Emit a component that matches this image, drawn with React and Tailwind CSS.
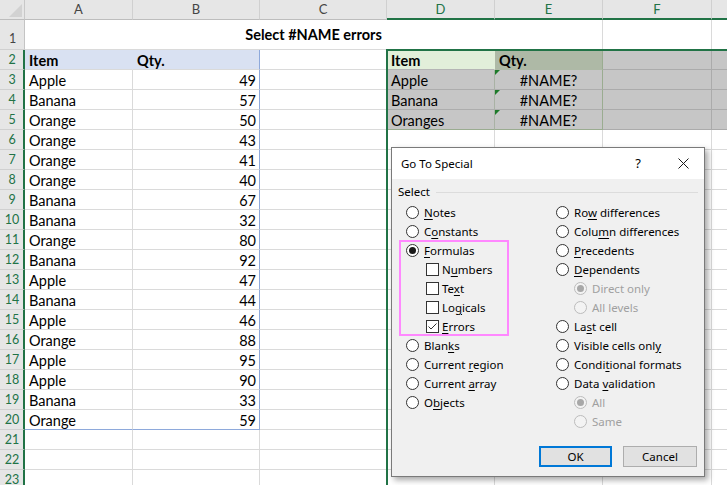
import React from "react";

const COLS = [
  { k: "A", w: "w-[108px]" },
  { k: "B", w: "w-[127px]" },
  { k: "C", w: "w-[127px]" },
  { k: "D", w: "w-[108px]" },
  { k: "E", w: "w-[108px]" },
  { k: "F", w: "w-[109px]" },
  { k: "G", w: "w-[40px]" },
];

const LEFT = [
  ["Apple", 49], ["Banana", 57], ["Orange", 50], ["Orange", 43], ["Orange", 41],
  ["Orange", 40], ["Banana", 67], ["Banana", 32], ["Orange", 80], ["Banana", 92],
  ["Apple", 47], ["Banana", 44], ["Apple", 46], ["Orange", 88], ["Apple", 95],
  ["Apple", 90], ["Banana", 33], ["Orange", 59],
];
const RIGHT = ["Apple", "Banana", "Oranges"];

function cellProps(col, row) {
  let bg = "bg-white";
  let br = "border-r-[#dadada]";
  let bb = "border-b-[#dadada]";
  let content = null;
  let align = "justify-start pl-[4px]";
  let bold = "";

  if (col === "A" || col === "B") {
    if (row === 2) {
      bg = "bg-[#d9e1f2]";
      bold = "font-bold";
      br = col === "A" ? "border-r-[#d9e1f2]" : "border-r-[#8ea9db]";
      content = col === "A" ? "Item" : "Qty.";
    } else if (row >= 3 && row <= 20) {
      const d = LEFT[row - 3];
      if (col === "A") {
        content = d[0];
      } else {
        content = d[1];
        align = "justify-end pr-[3px]";
        br = "border-r-[#8ea9db]";
      }
      if (row === 20) bb = "border-b-[#8ea9db]";
    }
  }
  if (col === "D" && row >= 2 && row <= 5) {
    if (row === 2) {
      bg = "bg-[#e2efda]";
      bold = "font-bold";
      content = "Item";
      br = "border-r-[#e2efda]";
      bb = "border-b-[#b5b5b5]";
    } else {
      bg = "bg-[#c6c6c6]";
      content = RIGHT[row - 3];
      br = "border-r-[#a9b2a4]";
      bb = row === 5 ? "border-b-[#9aac90]" : "border-b-[#adadad]";
    }
  }
  if (col === "E" && row >= 2 && row <= 5) {
    br = "border-r-[#9aac90]";
    if (row === 2) {
      bg = "bg-[#aeb9a6]";
      bold = "font-bold";
      content = "Qty.";
      bb = "border-b-[#aeb9a6]";
    } else {
      bg = "bg-[#c6c6c6]";
      content = "#NAME?";
      align = "justify-center";
      bb = row === 5 ? "border-b-[#9aac90]" : "border-b-[#adadad]";
    }
  }
  if ((col === "F" || col === "G") && row >= 2 && row <= 5) {
    bg = "bg-[#c6c6c6]";
    br = "border-r-[#ababab]";
    bb = "border-b-[#ababab]";
  }
  return { cls: `${bg} ${br} ${bb} ${align} ${bold}`, content };
}

function RowHeader({ n, h }) {
  const sel = n >= 2;
  return (
    <div
      className={`${h} w-[25px] shrink-0 bg-[#e6e6e6] border-b border-b-[#d0d0d0] flex justify-center text-[12.5px] ${
        sel
          ? "border-r-2 border-r-[#217346] text-[#217346] items-center"
          : "border-r border-r-[#c4c4c4] text-[#444] items-end pb-[3px]"
      }`}
    >
      <span className="leading-[14px] pl-[1px]">{n}</span>
    </div>
  );
}

function HeaderRow() {
  return (
    <div className="flex h-[20px]">
      <div className="w-[25px] shrink-0 h-[20px] bg-[#e6e6e6] border-r border-r-[#c8c8c8] border-b border-b-[#bdbdbd] relative flex items-end justify-end">
        <svg width="13" height="13" viewBox="0 0 13 13" className="mr-[2px] mb-[2px]">
          <polygon points="13,0 13,13 0,13" fill="#d2d2d2" />
        </svg>
      </div>
      {COLS.map((c, i) => {
        const sel = i >= 3;
        return (
          <div
            key={c.k}
            className={`${c.w} shrink-0 h-[20px] bg-[#e6e6e6] border-r border-r-[#d0d0d0] flex items-center justify-center text-[13px] ${
              sel
                ? "border-b-2 border-b-[#217346] text-[#217346] pt-[1px]"
                : "border-b border-b-[#bdbdbd] text-[#444]"
            }`}
          >
            {c.k === "G" ? "" : c.k}
          </div>
        );
      })}
    </div>
  );
}

function Row1() {
  return (
    <div className="flex h-[30px]">
      <RowHeader n={1} h="h-[30px]" />
      <div className="w-[578px] shrink-0 h-[30px] bg-white border-r border-r-[#dadada] border-b border-b-[#dadada] flex items-end justify-center pb-[5px]">
        <span className="font-bold leading-[18px]">Select #NAME errors</span>
      </div>
      <div className="w-[109px] shrink-0 h-[30px] bg-white border-r border-r-[#dadada] border-b border-b-[#dadada]" />
      <div className="w-[40px] shrink-0 h-[30px] bg-white border-r border-r-[#dadada] border-b border-b-[#dadada]" />
    </div>
  );
}

function DataRow({ n }) {
  return (
    <div className="flex h-[20px]">
      <RowHeader n={n} h="h-[20px]" />
      {COLS.map((c) => {
        const p = cellProps(c.k, n);
        const err = c.k === "E" && n >= 3 && n <= 5;
        return (
          <div
            key={c.k}
            className={`${c.w} shrink-0 h-[20px] border-r border-b flex items-center overflow-hidden whitespace-nowrap relative ${p.cls}`}
          >
            {err && (
              <span className="absolute left-0 top-0 w-0 h-0 border-t-[5px] border-t-[#1d7a2a] border-r-[5px] border-r-transparent" />
            )}
            <span className="leading-[19px] pt-[1px]">{p.content}</span>
          </div>
        );
      })}
    </div>
  );
}

function Radio({ on, disabled }) {
  return (
    <span
      className={`w-[13px] h-[13px] rounded-full border shrink-0 flex items-center justify-center ${
        disabled ? "border-[#bcbcbc] bg-[#f3f3f3]" : "border-[#333] bg-white"
      }`}
    >
      {on && (
        <span className={`w-[7px] h-[7px] rounded-full ${disabled ? "bg-[#a8a8a8]" : "bg-[#1a1a1a]"}`} />
      )}
    </span>
  );
}

function Check({ on }) {
  return (
    <span className="w-[13px] h-[13px] border border-[#333] bg-white shrink-0 flex items-center justify-center">
      {on && (
        <svg width="11" height="11" viewBox="0 0 11 11">
          <path d="M1.5 5.5 L4 8 L9.5 2.5" fill="none" stroke="#333" strokeWidth="1" />
        </svg>
      )}
    </span>
  );
}

function Label({ parts, disabled }) {
  return (
    <span className={`whitespace-nowrap ${disabled ? "text-[#a0a0a0]" : "text-black"}`}>
      {parts[0]}
      {parts[1] && <span className="underline underline-offset-[2px] decoration-[1px]">{parts[1]}</span>}
      {parts[2]}
    </span>
  );
}

const LEFTOPTS = [
  { t: "r", p: ["", "N", "otes"] },
  { t: "r", p: ["C", "o", "nstants"] },
  { t: "r", p: ["", "F", "ormulas"], on: true },
  { t: "c", p: ["N", "u", "mbers"] },
  { t: "c", p: ["Te", "x", "t"] },
  { t: "c", p: ["Lo", "g", "icals"] },
  { t: "c", p: ["", "E", "rrors"], on: true },
  { t: "r", p: ["Blan", "k", "s"] },
  { t: "r", p: ["Current ", "r", "egion"] },
  { t: "r", p: ["Current ", "a", "rray"] },
  { t: "r", p: ["O", "b", "jects"] },
];

const RIGHTOPTS = [
  { t: "r", p: ["Ro", "w", " differences"] },
  { t: "r", p: ["Colu", "m", "n differences"] },
  { t: "r", p: ["", "P", "recedents"] },
  { t: "r", p: ["", "D", "ependents"] },
  { t: "s", p: ["Direct only", "", ""], on: true },
  { t: "s", p: ["All levels", "", ""] },
  { t: "r", p: ["La", "s", "t cell"] },
  { t: "r", p: ["Visible cells onl", "y", ""] },
  { t: "r", p: ["Condi", "t", "ional formats"] },
  { t: "r", p: ["Data ", "v", "alidation"] },
  { t: "s", p: ["All", "", ""], on: true },
  { t: "s", p: ["Same", "", ""] },
];

function Opt({ o }) {
  if (o.t === "c") {
    return (
      <div className="h-[19px] flex items-center pl-[20px] gap-[3px]">
        <Check on={o.on} />
        <Label parts={o.p} />
      </div>
    );
  }
  if (o.t === "s") {
    return (
      <div className="h-[19px] flex items-center pl-[18px] gap-[5px]">
        <Radio on={o.on} disabled />
        <Label parts={o.p} disabled />
      </div>
    );
  }
  return (
    <div className="h-[19px] flex items-center gap-[5px]">
      <Radio on={o.on} />
      <Label parts={o.p} />
    </div>
  );
}

function Dialog() {
  return (
    <div className="absolute left-[391px] top-[147px] w-[314px] h-[330px] bg-[#f0f0f0] border border-[#7a7a7a] shadow-[3px_3px_6px_rgba(0,0,0,0.35)] flex flex-col font-['Noto_Sans',sans-serif] text-[11.5px] text-black">
      <div className="h-[31px] shrink-0 bg-white flex items-center pl-[9px]">
        <span>Go To Special</span>
        <span className="ml-auto w-[20px] text-center text-[13px]">?</span>
        <span className="ml-[25px] mr-[11px] w-[20px] flex justify-center">
          <svg width="11" height="11" viewBox="0 0 11 11">
            <path d="M0.5 0.5 L10.5 10.5 M10.5 0.5 L0.5 10.5" stroke="#1a1a1a" strokeWidth="1" />
          </svg>
        </span>
      </div>
      <div className="relative flex-1 flex flex-col">
        <div className="h-[14px] mt-[6px] flex items-center pl-[6px] pr-[6px]">
          <span>Select</span>
          <span className="flex-1 ml-[6px] border-t border-t-[#dcdcdc]" />
        </div>
        <div className="mt-[4px] flex pl-[14px]">
          <div className="w-[150px] flex flex-col">
            {LEFTOPTS.map((o, i) => (
              <Opt key={i} o={o} />
            ))}
          </div>
          <div className="flex flex-col">
            {RIGHTOPTS.map((o, i) => (
              <Opt key={i} o={o} />
            ))}
          </div>
        </div>
        <div className="absolute left-[7px] top-[61px] w-[110px] h-[96px] border-2 border-[#ff88ff]" />
        <div className="mt-auto mb-[9px] flex justify-end gap-[11px] pr-[7px]">
          <div className="w-[73px] h-[21px] border-2 border-[#0078d7] bg-[#e1e1e1] flex items-center justify-center">OK</div>
          <div className="w-[74px] h-[21px] border border-[#adadad] bg-[#e1e1e1] flex items-center justify-center">Cancel</div>
        </div>
      </div>
    </div>
  );
}

export default function App() {
  const rows = [];
  for (let n = 2; n <= 23; n++) rows.push(n);
  return (
    <div className="relative w-[727px] h-[485px] overflow-hidden bg-white font-['Lato',sans-serif] text-[14.5px] text-black">
      <HeaderRow />
      <Row1 />
      {rows.map((n) => (
        <DataRow key={n} n={n} />
      ))}
      <div className="absolute left-[386px] top-[49px] right-0 bottom-0 border-l-2 border-t-2 border-[#217346] pointer-events-none" />
      <Dialog />
    </div>
  );
}
